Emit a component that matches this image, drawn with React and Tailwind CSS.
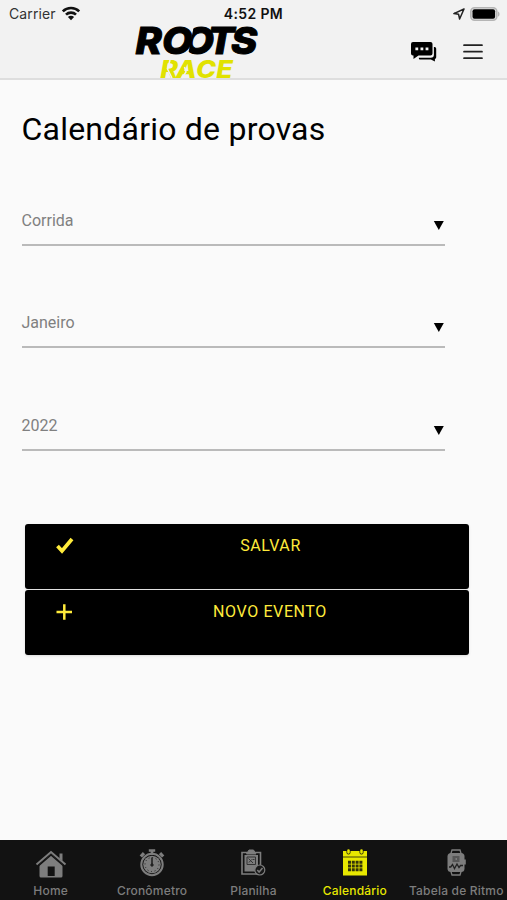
import React from "react";

const WifiIcon = () => (
  <svg width="20" height="15" viewBox="0 0 20 15" fill="none" stroke="#111" strokeWidth="2.6">
    <path d="M1.8 5.4a11.6 11.6 0 0 1 16.4 0" />
    <path d="M5 8.7a7 7 0 0 1 10 0" />
    <path d="M10 14.2 6.9 11a4.4 4.4 0 0 1 6.2 0z" fill="#111" stroke="none" />
  </svg>
);

const LocationIcon = () => (
  <svg width="12" height="12" viewBox="0 0 12 12" fill="none" stroke="#222" strokeWidth="1.5" strokeLinejoin="round">
    <path d="M11 1 .9 5.6 5.6 6.3 6.6 11z" />
  </svg>
);

const BatteryIcon = () => (
  <svg width="30" height="14" viewBox="0 0 30 14">
    <rect x="0.8" y="0.8" width="26" height="12.4" rx="3.8" fill="#e2e2e2" stroke="#b5b5b5" strokeWidth="1.6" />
    <rect x="2.5" y="2.3" width="22.6" height="9.4" rx="2" fill="#000" />
    <path d="M28 4.4c2 .8 2 4.4 0 5.2z" fill="#b5b5b5" />
  </svg>
);

const Logo = () => (
  <svg
    className="overflow-visible"
    width="124"
    height="53"
    viewBox="0 0 124 53"
    fontFamily="Inter, sans-serif"
    fontStyle="italic"
  >
    {/* the second O is open on its left */}
    <clipPath id="open-o">
      <path d="M60-4H90V34H52.500L54.500 22z" />
    </clipPath>
    <g fontSize="37.500" fontWeight="800" stroke="#000" strokeWidth="1">
      <text transform="scale(1.060 1)" x="0.500 25.500" y="28.500">
        RO
      </text>
      <g clipPath="url(#open-o)">
        <text transform="scale(1.060 1)" x="45.500" y="28.500">
          O
        </text>
      </g>
      <text transform="scale(1.060 1)" x="68.500 90.500" y="28.500">
        TS
      </text>
    </g>
    <text
      transform="scale(1.120 1)"
      x="22.500 36.500 54.500 72.500"
      y="53"
      fontSize="24"
      fontWeight="800"
      fill="#e1e200"
    >
      RACE
    </text>
    {/* cuts through the R and the A */}
    <path d="M35 35 32.500 44l4.500 9M49.500 42l1.500 5-4 6" fill="none" stroke="#f2f2f2" strokeWidth="1.500" />
  </svg>
);

const ChatIcon = () => (
  <svg width="26" height="20" viewBox="0 0 26 20">
    <path d="M2 0h17.500a2 2 0 0 1 2 2v9.500a2 2 0 0 1-2 2H7.500L2.500 17v-3.500H2a2 2 0 0 1-2-2V2a2 2 0 0 1 2-2z" />
    <path d="M22.900 5c1.600 0 2.300.6 2.300 2v8c0 1.200-.5 1.800-1.300 2v2.600l-4-2H9.500c-1.300 0-1.700-.6-1.700-1.900h12c2.200 0 3.100-1 3.100-3z" />
    <path d="M4.400 5.400h2.800v2.800H4.400zM9.500 5.400h2.800v2.800H9.500zM14.600 5.400h2.800v2.800h-2.800z" fill="#f2f2f2" />
  </svg>
);

const MenuIcon = () => (
  <svg width="20" height="16" viewBox="0 0 20 16" stroke="#222" strokeWidth="1.7" strokeLinecap="round">
    <path d="M1 1.200h18M1 7.700h18M1 14.200h18" />
  </svg>
);

const HomeIcon = () => (
  <svg width="32" height="30" viewBox="0 0 32 30">
    <path d="M16 5.500 27.500 15.500V27a1.500 1.500 0 0 1-1.500 1.500H6A1.500 1.500 0 0 1 4.500 27V15.500z" fill="#7d7d7d" />
    <path d="M1.500 15.500 16 3l14.500 12.500" fill="none" stroke="#7d7d7d" strokeWidth="2" />
    <path d="M24.500 4.500h3v7.500l-3-2.500z" fill="#7d7d7d" />
    <path d="M3.300 17 16 6l12.700 11" fill="none" stroke="#121212" strokeWidth="1.300" />
    <path d="M12.700 17.500h7V27h-7z" fill="#121212" />
  </svg>
);

const StopwatchIcon = () => (
  <svg width="28" height="28" viewBox="0 0 28 28">
    <g fill="none" stroke="#7d7d7d">
      <circle cx="14" cy="15.500" r="10.700" strokeWidth="2" />
      <path d="M10.800 1.500h6.400M14 2v4" strokeWidth="2.600" />
      <path d="M2.800 7.500 6 4.200M25.200 7.500l-3.200-3.300" strokeWidth="3.200" />
    </g>
    <circle cx="14" cy="15.500" r="8.800" fill="#7d7d7d" />
    <g stroke="#222" fill="none">
      <circle cx="14" cy="15.500" r="7" strokeDasharray="1 2.660" />
      <path d="M14 8.500v7" strokeWidth="1.600" />
      <circle cx="14" cy="16" r="1.200" fill="#222" />
    </g>
  </svg>
);

const ClipboardIcon = () => (
  <svg width="26" height="28" viewBox="0 0 26 28" fill="none" stroke="#7d7d7d">
    <path d="M2 3.500h18.500V25H2z" strokeWidth="1.600" />
    <path d="M6.500 5 9 1h4.500L16 5z" fill="#7d7d7d" />
    <path d="M4.500 6h13.500v16.500H4.500z" fill="#7d7d7d" stroke="none" />
    <path d="M7 8h8.500v7.500H7zM8.500 9.500l4.500 4.500M9 13.500l2.500-3M12.500 10.500h2" stroke="#333" />
    <circle cx="19.800" cy="21" r="5" fill="#181818" strokeWidth="1.200" />
    <path d="m17.300 21 1.800 2 3.400-4" strokeWidth="1.500" />
  </svg>
);

const CalendarIcon = () => (
  <svg width="26" height="28" viewBox="0 0 26 28">
    <path d="M1 2h24v24.500H1z" fill="#e8e800" />
    <path d="M1 8h24" stroke="#44440c" />
    <path d="M6.500 3.500V1.500M19.500 3.500V1.500" stroke="#121212" strokeWidth="4" strokeLinecap="round" />
    <path d="M6.500 3.500V1.500M19.500 3.500V1.500" stroke="#e8e800" strokeWidth="2.600" strokeLinecap="round" />
    <path d="M6 13.200h14.400M6 17h14.400M6 20.800h14.400" stroke="#333309" strokeWidth="3" strokeDasharray="3 .8" />
  </svg>
);

const WatchIcon = () => (
  <svg width="22" height="28" viewBox="0 0 22 28">
    <g fill="none" stroke="#7d7d7d" strokeWidth="1.300">
      <path d="M5.500 6 7 1h8l1.500 5M5.500 21 7 26h8l1.500-5" />
    </g>
    <rect x="2.500" y="4" width="17" height="19" rx="3.500" fill="#7d7d7d" />
    <path d="M19 10.500h1.800v5H19z" fill="#7d7d7d" />
    <path d="M7.500 8h7M7.500 10h3M12 10h2.500M7.500 12h7" stroke="#333" />
    <path d="M4 18h1.700l1.800-2.500 2 4 2.500-4.500 2 3.500 1.500-2h2.500" fill="none" stroke="#222" strokeWidth="1.300" />
  </svg>
);

const filters = ["Corrida", "Janeiro", "2022"];

const tabs = [
  { label: "Home", icon: <HomeIcon /> },
  { label: "Cronômetro", icon: <StopwatchIcon /> },
  { label: "Planilha", icon: <ClipboardIcon /> },
  { label: "Calendário", icon: <CalendarIcon />, active: true },
  { label: "Tabela de Ritmo", icon: <WatchIcon /> },
];

const App = () => {
  return (
    <div className="flex h-[900px] w-[507px] flex-col overflow-hidden bg-[#fafafa] font-['Roboto',sans-serif] text-black">
      {/* HEADER */}
      <header className="h-20 shrink-0 border-b-2 border-[#dedede] bg-[#f2f2f2]">
        <div className="grid h-[25px] grid-cols-3 items-center pl-[9px] pr-[7px] pt-[2px] font-['Inter',sans-serif] text-[14px]">
          <div className="flex items-center gap-[5px]">
            <span className="tracking-[0.1px] text-[#333]">Carrier</span>
            <WifiIcon />
          </div>
          <span className="pr-[2px] text-center font-semibold tracking-[0.35px] text-[#111]">4:52 PM</span>
          <div className="flex items-center justify-end gap-[5px]">
            <LocationIcon />
            <BatteryIcon />
          </div>
        </div>
        <div className="grid h-[53px] grid-cols-[135px_124px_1fr]">
          <div />
          <Logo />
          <div className="flex items-center justify-end gap-[26px] pr-6">
            <ChatIcon />
            <MenuIcon />
          </div>
        </div>
      </header>

      {/* CONTENT */}
      <main className="flex-1 px-[21.5px]">
        <h1 className="pt-[29px] text-[32px] leading-10 tracking-[0.22px]">Calendário de provas</h1>

        <div className="flex flex-col gap-[57.500px] pt-[51.500px]">
          {filters.map((value) => (
            <button
              key={value}
              className="flex h-[45px] w-[423.500px] justify-between border-b-2 border-[#bababa] pt-2 text-left text-[16px] leading-6 text-[#808080]"
            >
              {value}
              <svg width="12" height="24" viewBox="0 0 12 24">
                <path d="M.8 12h10L5.800 21z" fill="#000" />
              </svg>
            </button>
          ))}
        </div>

        <div className="ml-[3.500px] mt-[73.500px] flex w-[444px] flex-col gap-px text-[16px] tracking-[0.6px] text-[#ffeb3b]">
          <button className="flex h-[65px] rounded-[3px] bg-black pt-[11px] leading-[22px] shadow">
            <svg className="ml-[31px] mt-[2px]" width="18" height="18" viewBox="0 0 18 18" fill="none" stroke="#ffeb3b" strokeWidth="3.700">
              <path d="m1.500 9 4.500 5L16 2" />
            </svg>
            <span className="flex-1 pr-[2px] text-center">SALVAR</span>
          </button>
          <button className="flex h-[65px] rounded-[3px] bg-black pt-[11px] leading-[22px] shadow">
            <svg className="ml-[31px] mt-[2px]" width="18" height="18" viewBox="0 0 18 18" fill="none" stroke="#ffeb3b" strokeWidth="2.500">
              <path d="M.5 9h15.500M8.300 1.200v15.600" />
            </svg>
            <span className="flex-1 pr-[3px] text-center">NOVO EVENTO</span>
          </button>
        </div>
      </main>

      {/* TABS */}
      <nav className="grid h-[60px] shrink-0 grid-cols-5 bg-[#121212] font-['Inter',sans-serif]">
        {tabs.map((tab) => (
          <div key={tab.label} className="flex flex-col items-center pt-[9px]">
            <div className="flex h-8 items-start">{tab.icon}</div>
            <span
              className={`whitespace-nowrap text-[12px] font-medium leading-5 tracking-[0.2px] ${
                tab.active ? "text-[#e8e800]" : "text-[#7d7d7d]"
              }`}
            >
              {tab.label}
            </span>
          </div>
        ))}
      </nav>
    </div>
  );
};

export default App;
